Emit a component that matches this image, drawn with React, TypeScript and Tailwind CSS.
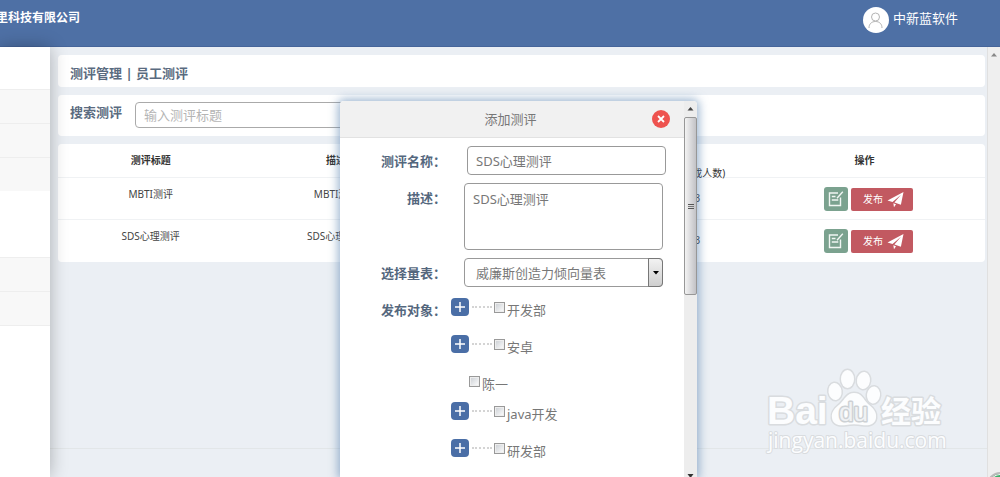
import React from "react";

const assessments = [
  { title: "MBTI测评", description: "MBTI测评", count: 3 },
  { title: "SDS心理测评", description: "SDS心理测评", count: 3 },
];

const departments = [
  { name: "开发部", expandable: true },
  { name: "安卓", expandable: true },
  { name: "陈一", expandable: false },
  { name: "java开发", expandable: true },
  { name: "研发部", expandable: true },
];

function Header() {
  return (
    <header className="flex h-[47px] shrink-0 items-start justify-between border-b border-[#46659a] bg-[#4e70a5] text-white">
      <h1 className="-ml-1 pt-2 text-[12px] leading-5 font-bold whitespace-nowrap">里科技有限公司</h1>
      <div className="mr-[42px] flex items-center gap-1 pt-[7px]">
        <span className="flex h-[26px] w-[26px] items-center justify-center rounded-full bg-white">
          <svg width="17" height="17" viewBox="0 0 17 17" fill="none" stroke="#b4b4b4" strokeWidth="1">
            <circle cx="8.500" cy="5" r="4" />
            <path d="M2 16c0-4 2.500-6.500 6.500-6.500S15 12 15 16" />
          </svg>
        </span>
        <span className="pb-1 text-[13px] leading-5">中新蓝软件</span>
      </div>
    </header>
  );
}

function Sidebar() {
  const item = "h-[34px] border-t border-[#eeeeee] bg-[#f8f8f8]";
  return (
    <aside className="relative z-10 w-[50px] shrink-0 bg-white shadow-[0_0_18px_rgba(0,0,0,0.28)]">
      <div className="h-[42px]" />
      <ul>
        <li className={item} />
        <li className={item} />
        <li className={item} />
        <li className="h-[66px]" />
        <li className={item} />
        <li className={item} />
      </ul>
      <div className="border-t border-[#eeeeee]" />
    </aside>
  );
}

function EditIcon() {
  return (
    <svg width="16" height="16" viewBox="0 0 16 16" fill="none" stroke="#f1f6f3" strokeWidth="1.400">
      <path d="M10 2H1.500v12.500h11V6.500" />
      <path d="M14.800.8 9 7.200" />
      <path d="M3.800 5.500h3.700M3.800 9h6.500" />
    </svg>
  );
}

function PlaneIcon() {
  return (
    <svg width="17" height="17" viewBox="0 0 17 17" fill="#fff">
      <path d="M16.500 1 .5 9.600l5 1.500L14 3.800l-6.600 7.800 6.500 2.200z" />
      <path d="M6.300 12.300 9 13.300 7 16.300z" />
    </svg>
  );
}

function AssessmentTable() {
  const head = "h-[33px] p-0 align-top";
  const cell = "border-t border-[#f0f2f4] p-0 pt-[6px] align-top leading-5";
  return (
    <table className="w-full table-fixed border-collapse text-center text-[10px] text-[#444]">
      <colgroup>
        <col className="w-[20%]" />
        <col className="w-[20%]" />
        <col />
        <col className="w-[9%]" />
        <col className="w-[26%]" />
      </colgroup>
      <thead className="leading-[13px] text-[#333]">
        <tr>
          <th className={head}><div className="pt-[10px]">测评标题</div></th>
          <th className={head}><div className="pt-[10px]">描述</div></th>
          <th className={head} />
          <th className={head}>
            <div className="h-[33px] pt-[10px] whitespace-nowrap">
              <div className="text-left">人数</div>
              <div className="font-normal">(完成人数)</div>
            </div>
          </th>
          <th className={head}><div className="pt-[10px]">操作</div></th>
        </tr>
      </thead>
      <tbody>
        {assessments.map((row) => (
          <tr key={row.title} className="h-[42px]">
            <td className={cell}>{row.title}</td>
            <td className={cell}>{row.description}</td>
            <td className={cell} />
            <td className={cell}><div className="pt-1 pr-[10px]">{row.count}</div></td>
            <td className="border-t border-[#f0f2f4] p-0 pt-[9px] align-top">
              <div className="flex items-center justify-center gap-[3px] pl-2">
                <button type="button" aria-label="编辑" className="flex h-6 w-6 items-center justify-center rounded-[3px] bg-[#7ba28f]">
                  <EditIcon />
                </button>
                <button type="button" className="flex h-[23px] items-center gap-1 rounded-[2px] bg-[#c25961] pr-[9px] pl-3 text-white">
                  <span>发布</span>
                  <PlaneIcon />
                </button>
              </div>
            </td>
          </tr>
        ))}
      </tbody>
    </table>
  );
}

function Tree() {
  return (
    <ul className="text-[#777]">
      {departments.map((d) =>
        d.expandable ? (
          <li key={d.name} className="flex h-[37px] items-start">
            <button type="button" aria-label={"展开" + d.name} className="flex h-[18px] w-[18px] items-center justify-center rounded-[4px] bg-[#4a6ea6]">
              <svg width="10" height="10" viewBox="0 0 10 10" stroke="#fff" strokeWidth="1.500">
                <path d="M5 0v10M0 5h10" />
              </svg>
            </button>
            <span className="mr-[2px] ml-[3px] mt-2 w-5 border-t-2 border-dotted border-[#d4d4d4]" />
            <TreeCheck name={d.name} />
          </li>
        ) : (
          <li key={d.name} className="flex h-[30px] items-start pl-[18px]">
            <TreeCheck name={d.name} />
          </li>
        )
      )}
    </ul>
  );
}

function TreeCheck({ name }: { name: string }) {
  return (
    <label className="flex items-start gap-[2px]">
      <input type="checkbox" className="mt-1 h-[11px] w-[11px] appearance-none border border-[#999] bg-linear-to-br from-[#c9cdd2] to-white shadow-[inset_0_0_0_1px_#eeeeee] checked:bg-[#4a6ea6]" />
      <span className="pt-[2px] leading-5">{name}</span>
    </label>
  );
}

function ModalScrollbar() {
  return (
    <div className="flex w-[13px] shrink-0 flex-col items-center bg-[#ededed]">
      <svg className="shrink-0" width="13" height="16" viewBox="0 0 13 16"><path d="M3.500 9.500 6.500 6l3 3.500z" fill="#444" /></svg>
      <div className="flex h-[178px] w-[13px] shrink-0 flex-col items-center justify-center gap-px rounded-[2px] border border-[#979797] bg-linear-to-r from-[#f3f3f3] to-[#c2c2c6]">
        <span className="h-px w-[6px] bg-[#555]" />
        <span className="h-px w-[6px] bg-[#777]" />
        <span className="h-px w-[6px] bg-[#555]" />
      </div>
      <svg className="mt-auto shrink-0" width="13" height="6" viewBox="0 0 13 6"><path d="M3.500 3h6l-3 4z" fill="#333" /></svg>
    </div>
  );
}

function AddModal() {
  const label = "w-[106px] shrink-0 text-right font-bold whitespace-nowrap text-[#54677d]";
  const field = "w-[199px] rounded-[4px] border border-[#999] bg-white text-[#777]";
  return (
    <div role="dialog" aria-labelledby="dialog-title" className="flex w-[357px] overflow-hidden rounded-t-[4px] bg-white text-[13px] leading-5 shadow-[0_0_10px_2px_rgba(74,120,170,0.55)]">
      <div className="min-w-0 flex-1">
        <div className="flex h-[37px] items-center border-b border-[#e2e2e2] bg-[#f1f1f1] pr-[14px]">
          <h2 id="dialog-title" className="flex-1 pl-[29px] text-center text-[#777]">添加测评</h2>
          <button type="button" aria-label="关闭" className="flex h-[18px] w-[18px] items-center justify-center rounded-full bg-[#ee534f]">
            <svg width="8" height="8" viewBox="0 0 8 8" stroke="#fff" strokeWidth="1.800"><path d="m1 1 6 6M7 1 1 7" /></svg>
          </button>
        </div>
        <form className="flex flex-col gap-2 pt-2">
          <div className="flex items-center gap-[21px]">
            <label htmlFor="name" className={label}>测评名称：</label>
            <input id="name" defaultValue="SDS心理测评" className={field + " h-[29px] px-2"} />
          </div>
          <div className="flex items-start gap-[18px]">
            <label htmlFor="description" className={label + " pt-[5px]"}>描述：</label>
            <textarea id="description" defaultValue="SDS心理测评" className={field + " block h-[67px] resize-none px-2 pt-[5px]"} />
          </div>
          <div className="flex items-center gap-[18px]">
            <label htmlFor="scale" className={label}>选择量表：</label>
            <div className="relative">
              <select id="scale" className={field + " block h-[29px] appearance-none pr-5 pl-[11px]"}>
                <option>威廉斯创造力倾向量表</option>
              </select>
              <span className="pointer-events-none absolute inset-y-0 right-0 flex w-[15px] items-center justify-center rounded-r-[4px] border border-[#777] bg-linear-to-b from-[#f2f2f2] to-[#cfcfcf]">
                <svg width="6" height="4" viewBox="0 0 6 4"><path d="M0 0h6L3 3.500z" fill="#000" /></svg>
              </span>
            </div>
          </div>
          <div className="flex items-start gap-[5px] pt-[3px]">
            <span className={label + " pt-[2px]"}>发布对象：</span>
            <Tree />
          </div>
        </form>
      </div>
      <ModalScrollbar />
    </div>
  );
}

function Watermark() {
  return (
    <svg
      className="pointer-events-none absolute right-[39px] bottom-[17px]"
      width="184"
      height="96"
      viewBox="0 0 184 96"
      fill="#fcfdfe"
      stroke="#d9dcdf"
      strokeWidth="3"
      strokeLinejoin="round"
      style={{ paintOrder: "stroke" }}
    >
      <text x="3" y="60" fontFamily="Liberation Sans" fontWeight="700" fontSize="39">Bai</text>
      <ellipse cx="71" cy="27.500" rx="6.500" ry="8.500" transform="rotate(-8 71 27.500)" />
      <ellipse cx="83.500" cy="15" rx="6.500" ry="9" />
      <ellipse cx="99.500" cy="16.500" rx="6.500" ry="8.500" transform="rotate(8 99.500 16.500)" />
      <ellipse cx="109.500" cy="31" rx="6.500" ry="8.500" transform="rotate(8 109.500 31)" />
      <path d="M90 29c8 0 9 6 14 11 5 4 9 8 8 14-1 7-8 8-14 7-5-1-11-1-16 0-6 1-13 0-14-7-1-6 3-10 8-14 5-5 7-11 14-11z" />
      <text x="75" y="57" fontFamily="Liberation Sans" fontSize="26" fill="#f0f2f4" stroke="#cdd1d4">du</text>
      <text x="117" y="58" fontFamily="Noto Sans CJK SC" fontWeight="700" fontSize="30">经验</text>
      <text x="4" y="84" fontFamily="Open Sans" fontSize="21" strokeWidth="2">jingyan.baidu.com</text>
    </svg>
  );
}

export default function App() {
  return (
    <div className="flex h-screen flex-col overflow-hidden bg-[#ebeff4] font-['Noto_Sans','Noto_Sans_CJK_SC',sans-serif]">
      <Header />
      <div className="flex min-h-0 flex-1">
        <Sidebar />
        <main className="relative flex min-w-0 flex-1 flex-col">
          <div className="flex flex-1 flex-col gap-2 pt-2 pr-[2px] pl-2 text-[13px] leading-5">
            <h2 className="rounded-[4px] bg-white px-3 pt-2 pb-1 font-bold text-[#5a6b80]">测评管理 | 员工测评</h2>
            <div className="flex h-[41px] items-start gap-[13px] rounded-[4px] bg-white px-3 pt-[7px]">
              <label htmlFor="search" className="font-bold text-[#5a6b80]">搜索测评</label>
              <input id="search" placeholder="输入测评标题" className="h-[26px] w-[260px] rounded-[4px] border border-[#aaa] px-2 placeholder:text-[#b5b5b5]" />
            </div>
            <div className="rounded-[4px] bg-white">
              <AssessmentTable />
            </div>
          </div>
          <footer className="h-[29px] shrink-0 border-t border-[#e2e6e8]" />
          <div className="absolute inset-0 flex items-stretch justify-center overflow-hidden pt-[54px]">
            <AddModal />
          </div>
          <Watermark />
        </main>
        <div className="relative flex w-[13px] shrink-0 justify-center overflow-hidden border-l border-[#e0e0e0] bg-[#efefef]">
          <svg className="mt-[5px]" width="8" height="5" viewBox="0 0 8 5"><path d="M1 4.500 4 1l3 3.500z" fill="#888" /></svg>
          <span className="absolute -right-[13px] -bottom-[21px] h-[26px] w-[26px] rounded-full border-2 border-[#bbb] bg-[#3fae6b] shadow-[inset_0_0_0_1px_#fff]" />
        </div>
      </div>
    </div>
  );
}
